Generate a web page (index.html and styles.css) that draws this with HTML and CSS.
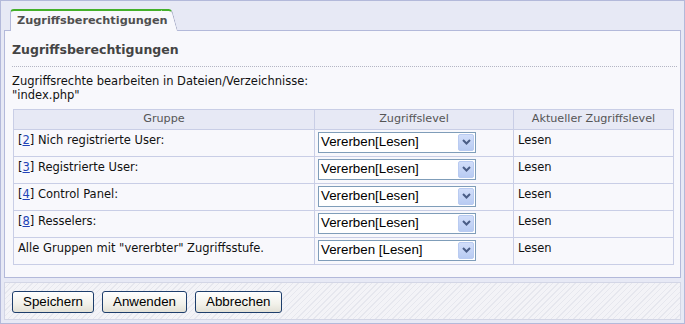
FILE: index.html
```html
<!DOCTYPE html>
<html lang="de">
<head>
<meta charset="utf-8">
<title>Zugriffsberechtigungen</title>
<link rel="stylesheet" href="styles.css">
</head>
<body>
<div class="frame">
  <div class="tabs">
    <div class="tab">Zugriffsberechtigungen</div>
  </div>
  <div class="panel">
    <h1 class="title">Zugriffsberechtigungen</h1>
    <p class="intro">Zugriffsrechte bearbeiten in Dateien/Verzeichnisse:<br>"index.php"</p>
    <table class="grid">
      <colgroup>
        <col class="c1"><col class="c2"><col class="c3">
      </colgroup>
      <thead>
        <tr><th>Gruppe</th><th>Zugriffslevel</th><th>Aktueller Zugriffslevel</th></tr>
      </thead>
      <tbody>
        <tr>
          <td>[<a href="#">2</a>] Nich registrierte User:</td>
          <td class="selcell"><div class="select"><span class="val">Vererben[Lesen]</span><span class="arrow"><svg width="9" height="6" viewBox="0 0 9 6"><path d="M1 1 L4.5 4.5 L8 1" fill="none" stroke="#4a5d86" stroke-width="2"/></svg></span></div></td>
          <td>Lesen</td>
        </tr>
        <tr>
          <td>[<a href="#">3</a>] Registrierte User:</td>
          <td class="selcell"><div class="select"><span class="val">Vererben[Lesen]</span><span class="arrow"><svg width="9" height="6" viewBox="0 0 9 6"><path d="M1 1 L4.5 4.5 L8 1" fill="none" stroke="#4a5d86" stroke-width="2"/></svg></span></div></td>
          <td>Lesen</td>
        </tr>
        <tr>
          <td>[<a href="#">4</a>] Control Panel:</td>
          <td class="selcell"><div class="select"><span class="val">Vererben[Lesen]</span><span class="arrow"><svg width="9" height="6" viewBox="0 0 9 6"><path d="M1 1 L4.5 4.5 L8 1" fill="none" stroke="#4a5d86" stroke-width="2"/></svg></span></div></td>
          <td>Lesen</td>
        </tr>
        <tr>
          <td>[<a href="#">8</a>] Resselers:</td>
          <td class="selcell"><div class="select"><span class="val">Vererben[Lesen]</span><span class="arrow"><svg width="9" height="6" viewBox="0 0 9 6"><path d="M1 1 L4.5 4.5 L8 1" fill="none" stroke="#4a5d86" stroke-width="2"/></svg></span></div></td>
          <td>Lesen</td>
        </tr>
        <tr>
          <td>Alle Gruppen mit "vererbter" Zugriffsstufe.</td>
          <td class="selcell"><div class="select"><span class="val">Vererben [Lesen]</span><span class="arrow"><svg width="9" height="6" viewBox="0 0 9 6"><path d="M1 1 L4.5 4.5 L8 1" fill="none" stroke="#4a5d86" stroke-width="2"/></svg></span></div></td>
          <td>Lesen</td>
        </tr>
      </tbody>
    </table>
  </div>
  <div class="buttons">
    <button class="btn" type="button">Speichern</button>
    <button class="btn" type="button">Anwenden</button>
    <button class="btn" type="button">Abbrechen</button>
  </div>
</div>
</body>
</html>
```
FILE: styles.css
```css
html, body {
  margin: 0;
  padding: 0;
  background: #ffffff;
}
body {
  font-family: "DejaVu Sans", Verdana, sans-serif;
  font-size: 11.5px;
  color: #111111;
}
.frame {
  box-sizing: border-box;
  width: 685px;
  height: 324px;
  border: 1px solid #b3b9da;
  background: #e7e9f5;
  padding: 0 3px 3px 3px;
  display: flex;
  flex-direction: column;
}
.tabs {
  height: 29px;
  display: flex;
  align-items: flex-end;
  padding-left: 6px;
}
.tab {
  position: relative;
  z-index: 1;
  box-sizing: border-box;
  height: 22px;
  margin-bottom: -1px;
  padding: 2px 1px 0 6px;
  background: #f8f8fc;
  border-left: 1px solid #b3b9da;
  border-top: 2px solid #43b02a;
  border-top-left-radius: 4px;
  font-weight: bold;
  font-size: 11.3px;
  line-height: 15px;
  color: #505050;
}
.tab::after {
  content: "";
  position: absolute;
  top: -2px;
  bottom: 0;
  right: -3px;
  width: 10px;
  background: #f8f8fc;
  border-top: 2px solid #43b02a;
  border-right: 1px solid #a9aec8;
  border-top-right-radius: 4px;
  transform-origin: top left;
  transform: skewX(15deg);
  z-index: -1;
}
.panel {
  box-sizing: border-box;
  height: 249px;
  border: 1px solid #b3b9da;
  background: #f8f8fc;
  padding: 0 3px 0 7px;
}
.title {
  margin: 10px 0 0 0;
  padding-bottom: 7px;
  border-bottom: 1px dotted #b4b6c4;
  font-size: 12.5px;
  line-height: 18px;
  font-weight: bold;
  color: #444444;
}
.intro {
  margin: 7px 0 0 0;
  line-height: 14px;
}
.grid {
  margin: 7px 0 0 1px;
  width: 660px;
  border-collapse: collapse;
  table-layout: fixed;
  background: #f8f8fc;
}
.c1 { width: 301px; }
.c2 { width: 199px; }
.c3 { width: 160px; }
.grid th, .grid td {
  border: 1px solid #c9cee6;
}
.grid th {
  background: #e7e9f5;
  color: #555555;
  font-weight: normal;
  font-size: 11.2px;
  text-align: center;
  padding: 2px 4px 3px;
  line-height: 14px;
}
.grid td {
  padding: 3px 4px;
  height: 20px;
  vertical-align: top;
  line-height: 14px;
}
.grid td.selcell {
  padding: 2px 3px 3px 3px;
}
.grid a {
  color: #2344b8;
}
.select {
  box-sizing: border-box;
  width: 158px;
  height: 21px;
  border: 1px solid #7f9db9;
  background: #ffffff;
  display: flex;
  align-items: center;
  justify-content: space-between;
  padding: 0 1px 0 2px;
  font-family: "Liberation Sans", Arial, sans-serif;
  font-size: 13.33px;
  color: #000000;
}
.arrow {
  box-sizing: border-box;
  width: 16px;
  height: 17px;
  border: 1px solid #b9cbf1;
  border-radius: 2px;
  background: linear-gradient(#d2defa, #b8cbf2);
  display: flex;
  align-items: center;
  justify-content: center;
}
.buttons {
  box-sizing: border-box;
  margin-top: 4px;
  height: 38px;
  border: 1px solid #d3d6e6;
  background: repeating-linear-gradient(135deg, #f3f3f7 0 3px, #e6e7ee 3px 4px);
  padding: 8px 0 0 7px;
  display: flex;
  align-items: flex-start;
  gap: 8px;
}
.btn {
  box-sizing: border-box;
  height: 22px;
  padding: 0 10px;
  border: 1px solid #1e3e6c;
  border-radius: 3px;
  background: linear-gradient(#ffffff, #f2f1ea 60%, #e2e0d6);
  font-family: "Liberation Sans", Arial, sans-serif;
  font-size: 13.33px;
  color: #000000;
  line-height: 20px;
}
```
